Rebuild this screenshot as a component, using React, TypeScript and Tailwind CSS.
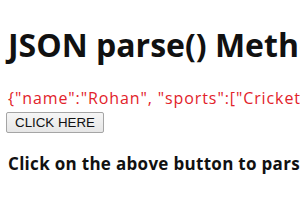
export default function App() {
  return (
    <div className="w-[300px] h-[210px] overflow-hidden bg-white px-2 whitespace-nowrap" style={{ fontFamily: '"Open Sans", "Noto Sans", sans-serif' }}>
      <h1 className="pt-[25px] text-[32px] leading-[40px] font-bold text-[#111]">JSON parse() Method</h1>
      <p className="mt-[23px] text-[16px] leading-[20px] tracking-[0.9px] text-[#e2222a]">{'{"name":"Rohan", "sports":["Cricket","Football"]}'}</p>
      <button className="block mt-[4px] -ml-[2px] h-[21px] px-[8px] text-[13.33px] leading-[17px] text-[#111] bg-gradient-to-b from-[#f6f6f6] to-[#e6e6e6] border border-[#a5a5a5] rounded-[2px]" style={{ fontFamily: '"Liberation Sans", Arial, sans-serif' }}>CLICK HERE</button>
      <h3 className="mt-[20px] text-[17px] leading-[22px] tracking-[0.3px] font-bold text-[#111]">Click on the above button to parse the JSON</h3>
    </div>
  )
}
